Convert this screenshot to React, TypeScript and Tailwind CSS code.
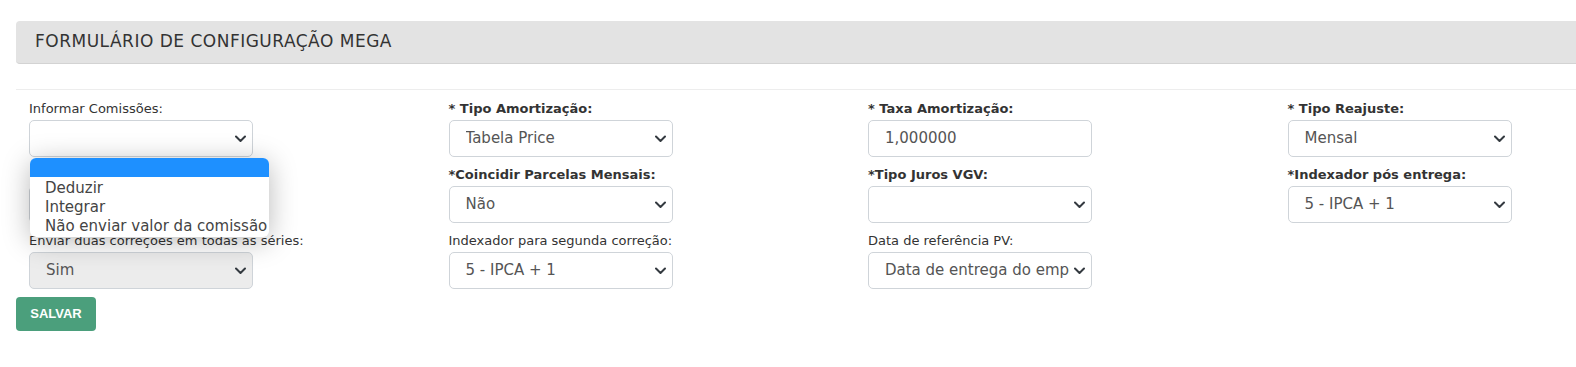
type Field = {
  label: string;
  bold?: boolean;
  value?: string;
  input?: boolean;
  disabled?: boolean;
};

const columns: Field[][] = [
  [
    { label: "Informar Comissões:" },
    { label: "" },
    { label: "Enviar duas correções em todas as séries:", value: "Sim", disabled: true },
  ],
  [
    { label: "* Tipo Amortização:", bold: true, value: "Tabela Price" },
    { label: "*Coincidir Parcelas Mensais:", bold: true, value: "Não" },
    { label: "Indexador para segunda correção:", value: "5 - IPCA + 1" },
  ],
  [
    { label: "* Taxa Amortização:", bold: true, value: "1,000000", input: true },
    { label: "*Tipo Juros VGV:", bold: true },
    { label: "Data de referência PV:", value: "Data de entrega do empreendimento" },
  ],
  [
    { label: "* Tipo Reajuste:", bold: true, value: "Mensal" },
    { label: "*Indexador pós entrega:", bold: true, value: "5 - IPCA + 1" },
  ],
];

function Chevron() {
  return (
    <svg
      className="absolute right-[6px] top-1/2 -translate-y-1/2"
      width="11"
      height="8"
      viewBox="0 0 11 8"
      fill="none"
    >
      <path d="M1 1.5L5.5 6L10 1.5" stroke="#343a40" strokeWidth="2" strokeLinecap="round" strokeLinejoin="round" />
    </svg>
  );
}

function FormField({ label, bold, value, input, disabled }: Field) {
  return (
    <div className="mb-[9px] flex flex-col">
      <label
        className={`mb-[2px] h-[18px] whitespace-nowrap text-[13px] leading-[18px] text-[#333] ${
          bold ? "font-bold" : "font-normal"
        }`}
      >
        {label}
      </label>
      <div
        className={`relative flex h-[37px] w-[224px] items-center overflow-hidden rounded-[5px] border border-[#cfd4d9] pl-[16px] text-[15px] text-[#555] ${
          disabled ? "bg-[#ececec]" : "bg-white"
        } ${input ? "pr-[12px]" : "pr-[21px]"}`}
      >
        <span className="overflow-hidden whitespace-nowrap">{value}</span>
        {!input && <Chevron />}
      </div>
    </div>
  );
}

export default function App() {
  return (
    <div className="relative h-[367px] w-[1576px] overflow-hidden bg-white font-['DejaVu_Sans',sans-serif]">
      <div className="pl-4 pt-[21px]">
        <div className="-mr-4 flex h-[43px] items-center rounded-l-[4px] border-b border-[#d3d3d3] bg-[#e3e3e3] pl-[19px] text-[17px] tracking-[0.5px] text-[#333]">
          FORMULÁRIO DE CONFIGURAÇÃO MEGA
        </div>
        <div className="mt-[25px] border-t border-[#ededed]" />

        <div className="mt-[10px] flex pl-[13px]">
          {columns.map((col, i) => (
            <div key={i} className="w-[419.5px] shrink-0">
              {col.map((f, j) => (
                <FormField key={j} {...f} />
              ))}
            </div>
          ))}
        </div>

        <button className="-mt-[1px] h-[34px] w-[80px] rounded-[4px] bg-[#4b9f7c] font-['Liberation_Sans',sans-serif] text-[13px] font-bold text-white">
          SALVAR
        </button>
      </div>

      {/* open options list of "Informar Comissões" */}
      <div className="absolute left-[30px] top-[158px] w-[239px] overflow-hidden rounded-[6px] bg-white pb-[1px] text-[15px] leading-[19px] text-[#444] shadow-[0_4px_28px_rgba(0,0,0,0.28)]">
        <div className="h-[19px] bg-[#1e90ff]" />
        <div className="pt-[2px]">
          <div className="pl-[15px]">Deduzir</div>
          <div className="pl-[15px]">Integrar</div>
          <div className="whitespace-nowrap pl-[15px]">Não enviar valor da comissão</div>
        </div>
      </div>
    </div>
  );
}
